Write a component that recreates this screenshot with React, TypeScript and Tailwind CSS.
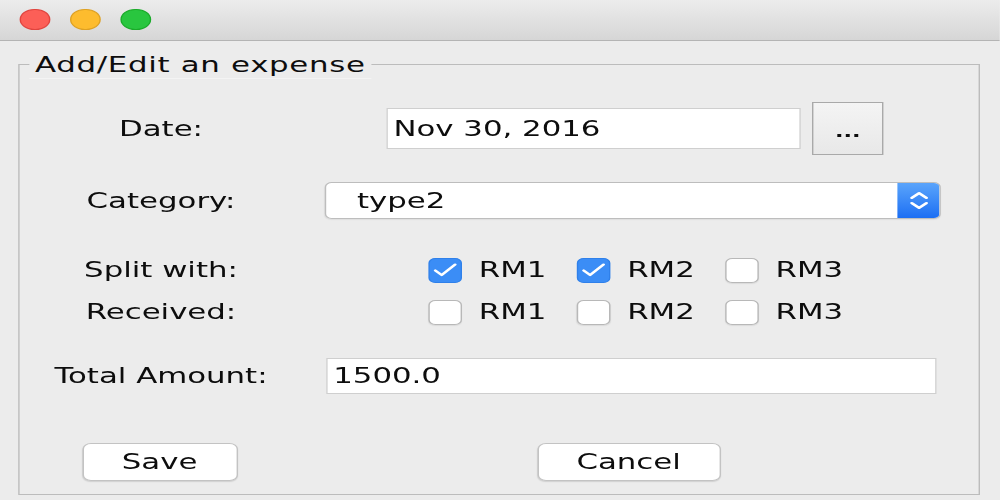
import React from "react";

// Native mac look: everything is laid out narrow, then stretched horizontally like the screenshot
function Box({ checked }: { checked: boolean }) {
  return (
    <span
      className={`flex h-[25px] w-[24px] items-center justify-center rounded-[5px] ${
        checked
          ? "bg-[#3b8df6] border border-[#2f80ea]"
          : "bg-white border border-[#b8b8b8] shadow-[0_1px_1px_rgba(0,0,0,0.08)]"
      }`}
    >
      {checked && (
        <svg viewBox="0 0 24 24" className="h-[22px] w-[20px]" fill="none" stroke="white" strokeWidth={2.6} strokeLinecap="round" strokeLinejoin="round">
          <path d="M3.5 12.5l5.5 5.5L20.5 5.5" />
        </svg>
      )}
    </span>
  );
}

function CheckRow({ values }: { values: boolean[] }) {
  return (
    <div className="ml-[74px] flex items-center">
      {values.map((v, i) => (
        <div key={i} className="flex w-[106px] items-center gap-[12px]">
          <Box checked={v} />
          <span>RM{i + 1}</span>
        </div>
      ))}
    </div>
  );
}

function Row({ label, className, children }: { label: string; className: string; children: React.ReactNode }) {
  return (
    <div className={`flex items-center ${className}`}>
      <div className="w-[202px] text-center">{label}</div>
      <div className="flex items-center pl-[16px]">{children}</div>
    </div>
  );
}

export default function App() {
  return (
    <div className="h-[500px] w-[1000px] overflow-hidden bg-[#ececec]">
      <div className="h-[500px] w-[714px] origin-top-left scale-x-[1.4] font-['DejaVu_Sans',sans-serif] text-[22px] leading-none text-[#0d0d0d]">
        {/* title bar */}
        <div className="flex h-[41px] items-center gap-[14px] border-b border-[#b4b4b4] bg-gradient-to-b from-[#ececec] to-[#d6d6d6] pl-[14px] pb-[1px]">
          <span className="h-[21px] w-[22px] rounded-full border border-[#e0443e] bg-[#fc5f57]" />
          <span className="h-[21px] w-[22px] rounded-full border border-[#dea123] bg-[#fdbc2e]" />
          <span className="h-[21px] w-[22px] rounded-full border border-[#1aab29] bg-[#29c63f]" />
        </div>

        {/* titled border */}
        <div className="relative ml-[13px] mt-[23px] flex h-[431px] w-[687px] flex-col border border-[#bcbcbc]">
          <div className="absolute left-[7px] top-[-13px] h-[26px] bg-[#ececec] px-[4px] leading-[26px] tracking-[0.5px]">Add/Edit an expense</div>

          <Row label="Date:" className="mt-[37px] h-[53px]">
            <div className="ml-[44px] flex h-[41px] w-[296px] items-center border border-[#cfcfcf] bg-white pl-[4px]">Nov 30, 2016</div>
            <div className="ml-[8px] flex h-[53px] w-[51px] items-center justify-center border border-[#a9a9a9] bg-gradient-to-b from-[#f4f4f4] to-[#e8e8e8] pt-[6px] text-[16px] font-bold">
              ...
            </div>
          </Row>

          <Row label="Category:" className="mt-[27px] h-[37px]">
            <div className="flex h-[37px] w-[440px] items-stretch overflow-hidden rounded-[5px] border border-[#bdbdbd] bg-white shadow-[0_1px_1px_rgba(0,0,0,0.06)]">
              <div className="flex flex-1 items-center pl-[22px]">type2</div>
              <div className="flex w-[30px] items-center justify-center bg-gradient-to-b from-[#5aa4fb] to-[#1b6ef3]">
                <svg viewBox="0 0 14 24" className="h-[25px] w-[15px]" fill="none" stroke="white" strokeWidth={2.2} strokeLinecap="round" strokeLinejoin="round">
                  <path d="M2 9.5L7 5l5 4.5" />
                  <path d="M2 14.5L7 19l5-4.5" />
                </svg>
              </div>
            </div>
          </Row>

          <Row label="Split with:" className="mt-[38px] h-[26px]">
            <CheckRow values={[true, true, false]} />
          </Row>

          <Row label="Received:" className="mt-[16px] h-[26px]">
            <CheckRow values={[false, false, false]} />
          </Row>

          <Row label="Total Amount:" className="mt-[33px] h-[36px]">
            <div className="ml-[1px] flex h-[36px] w-[436px] items-center border border-[#cfcfcf] bg-white pl-[4px]">1500.0</div>
          </Row>

          <div className="mt-[49px] flex h-[38px] items-center">
            <div className="flex w-[200px] justify-center">
              <div className="flex h-[38px] w-[111px] items-center justify-center rounded-[6px] border border-[#c3c3c3] bg-white shadow-[0_1px_1px_rgba(0,0,0,0.12)]">Save</div>
            </div>
            <div className="flex w-[440px] justify-center pl-[30px]">
              <div className="flex h-[38px] w-[131px] items-center justify-center rounded-[6px] border border-[#c3c3c3] bg-white shadow-[0_1px_1px_rgba(0,0,0,0.12)]">Cancel</div>
            </div>
          </div>
        </div>
      </div>
    </div>
  );
}
